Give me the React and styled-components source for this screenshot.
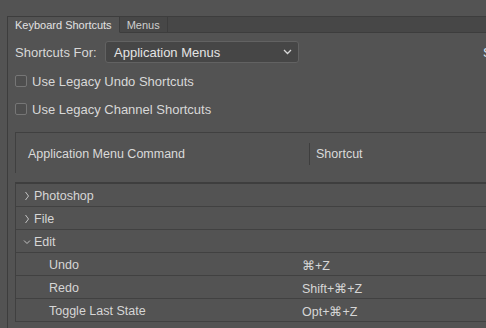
import React from "react";
import styled, { createGlobalStyle } from "styled-components";

const GlobalStyle = createGlobalStyle`
  html, body {
    margin: 0;
    padding: 0;
    background: #535353;
    overflow: hidden;
    width: 486px;
    height: 328px;
  }
  body {
    font-family: "Liberation Sans", Arial, sans-serif;
    color: #d8d8d8;
  }
`;

const Page = styled.div`
  box-sizing: border-box;
  width: 486px;
  height: 328px;
  padding: 16px 0 0 7px;
  overflow: hidden;
`;

const Panel = styled.div`
  height: 100%;
  border-left: 1px solid #3d3d3d;
  border-top: 1px solid #3d3d3d;
`;

const TabBar = styled.div`
  display: flex;
  height: 16px;
  background: #474747;
`;

const Tab = styled.div`
  box-sizing: border-box;
  height: 16px;
  padding: 1px 7px 0;
  font-size: 11px;
  line-height: 15px;
  color: ${(p) => (p.$active ? "#e2e2e2" : "#cfcfcf")};
  background: ${(p) => (p.$active ? "#535353" : "transparent")};
  border-right: 1px solid #3d3d3d;
  border-bottom: 1px solid ${(p) => (p.$active ? "#535353" : "#3d3d3d")};
  white-space: nowrap;
`;

const TabFill = styled.div`
  flex: 1;
  border-bottom: 1px solid #3d3d3d;
`;

const Content = styled.div`
  padding: 8px 0 0 7px;
`;

const FormRow = styled.div`
  display: flex;
  align-items: center;
  height: 22px;
  font-size: 13px;
  white-space: nowrap;
  & > * {
    flex-shrink: 0;
  }
`;

const Label = styled.div`
  width: 90px;
`;

const Select = styled.div`
  box-sizing: border-box;
  width: 194px;
  height: 22px;
  display: flex;
  align-items: center;
  justify-content: space-between;
  padding: 0 6px 0 8px;
  background: #464646;
  border: 1px solid #626262;
  border-radius: 3px;
  color: #e4e4e4;
`;

const EdgeLabel = styled.div`
  margin-left: 184px;
  color: #dfe6f2;
`;

const CheckRow = styled.label`
  display: flex;
  align-items: center;
  height: 28px;
  font-size: 13px;
  white-space: nowrap;
  margin-top: ${(p) => p.$gap || 0}px;
`;

const Box = styled.span`
  box-sizing: border-box;
  width: 12px;
  height: 12px;
  border: 1px solid #767676;
  border-radius: 2px;
  background: #4e4e4e;
  margin-right: 5px;
`;

const HeaderBox = styled.div`
  box-sizing: border-box;
  margin-top: 9px;
  height: 41px;
  padding-top: 1px;
  display: grid;
  grid-template-columns: 293px 1px 1fr;
  align-items: center;
  border-top: 1px solid #404040;
  border-left: 1px solid #404040;
  font-size: 12.5px;
  color: #dadada;
  white-space: nowrap;
`;

const HeadCell = styled.div`
  padding-left: ${(p) => p.$pad}px;
`;

const HeadSep = styled.div`
  height: 22px;
  background: #3e3e3e;
`;

const Body = styled.div`
  margin-top: 9px;
  border-top: 2px solid #3e3e3e;
  border-left: 1px solid #404040;
`;

const Row = styled.div`
  box-sizing: border-box;
  height: 23px;
  padding-top: 2px;
  display: grid;
  grid-template-columns: 286px 1fr;
  align-items: center;
  border-bottom: 1px solid #414141;
  font-size: 12.5px;
  color: #d6d6d6;
  white-space: nowrap;
`;

const NameCell = styled.div`
  display: flex;
  align-items: center;
  padding-left: ${(p) => (p.$sub ? 33 : 4)}px;
`;

const Twisty = styled.span`
  width: 14px;
  height: 12px;
  display: flex;
  align-items: center;
  justify-content: center;
`;

const Chevron = ({ open }) =>
  open ? (
    <svg width="8" height="6" viewBox="0 0 8 6" fill="none">
      <path d="M1 1.5 L4 4.5 L7 1.5" stroke="#c2c2c2" strokeWidth="1" />
    </svg>
  ) : (
    <svg width="6" height="10" viewBox="0 0 6 10" fill="none">
      <path d="M1.5 1 L4.5 5 L1.5 9" stroke="#c2c2c2" strokeWidth="1" />
    </svg>
  );

const SelectArrow = () => (
  <svg width="9" height="6" viewBox="0 0 9 6" fill="none">
    <path d="M1 1 L4.5 4.5 L8 1" stroke="#d8d8d8" strokeWidth="1.3" />
  </svg>
);

const rows = [
  { name: "Photoshop", type: "closed" },
  { name: "File", type: "closed" },
  { name: "Edit", type: "open" },
  { name: "Undo", sc: "⌘+Z" },
  { name: "Redo", sc: "Shift+⌘+Z" },
  { name: "Toggle Last State", sc: "Opt+⌘+Z" },
];

export default function App() {
  return (
    <>
      <GlobalStyle />
      <Page>
        <Panel>
          <TabBar>
            <Tab $active>Keyboard Shortcuts</Tab>
            <Tab>Menus</Tab>
            <TabFill />
          </TabBar>
          <Content>
            <FormRow>
              <Label>Shortcuts For:</Label>
              <Select>
                <span>Application Menus</span>
                <SelectArrow />
              </Select>
              <EdgeLabel>Set:</EdgeLabel>
            </FormRow>
            <CheckRow $gap={4}>
              <Box />
              Use Legacy Undo Shortcuts
            </CheckRow>
            <CheckRow>
              <Box />
              Use Legacy Channel Shortcuts
            </CheckRow>
            <HeaderBox>
              <HeadCell $pad={12}>Application Menu Command</HeadCell>
              <HeadSep />
              <HeadCell $pad={6}>Shortcut</HeadCell>
            </HeaderBox>
            <Body>
              {rows.map((r) => (
                <Row key={r.name}>
                  <NameCell $sub={!r.type}>
                    {r.type && (
                      <Twisty>
                        <Chevron open={r.type === "open"} />
                      </Twisty>
                    )}
                    <span>{r.name}</span>
                  </NameCell>
                  <div>{r.sc || ""}</div>
                </Row>
              ))}
            </Body>
          </Content>
        </Panel>
      </Page>
    </>
  );
}
